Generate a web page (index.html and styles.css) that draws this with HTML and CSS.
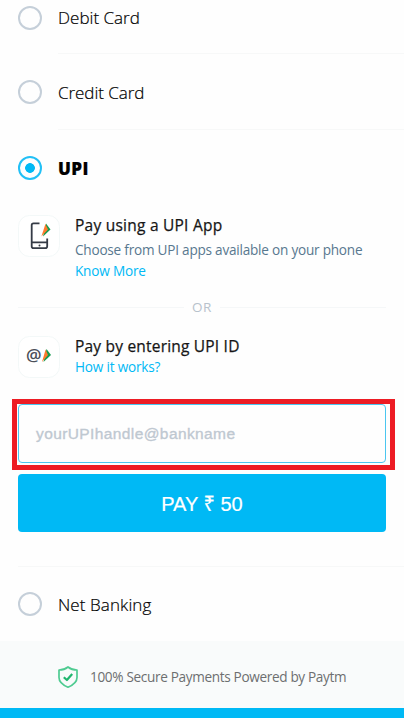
FILE: index.html
```html
<!DOCTYPE html>
<html lang="en">
<head>
<meta charset="utf-8">
<title>Payment options</title>
<link rel="stylesheet" href="styles.css">
</head>
<body>
<main class="page">
  <div class="option option-first"><span class="radio"></span><span class="label debit">Debit Card</span></div>
  <div class="option"><span class="radio"></span><span class="label credit">Credit Card</span></div>
  <div class="option option-upi"><span class="radio checked"></span><span class="label upi">UPI</span></div>
  <section class="method method-app">
    <svg class="tile" viewBox="0 0 42 42">
      <rect class="tile-box" x=".5" y=".5" width="41" height="41" rx="11"/>
      <path class="phone" d="M21.500 8.300H15.500Q13.700 8.300 13.700 10.100V31.300Q13.700 33.200 15.500 33.200H27.300Q29.200 33.200 29.200 31.300V23.500M13.700 27.300H29.200"/>
      <circle class="phone-key" cx="21.500" cy="30.400" r="1"/>
      <path class="green" d="M28 8.500l4.500 6-7.500 7z"/>
      <path class="orange" d="M27.400 9l2.600 5.600-6.600 6.900z"/>
    </svg>
    <div class="copy">
      <h2 class="title title-app">Pay using a UPI App</h2>
      <p class="hint">Choose from UPI apps available on your phone</p>
      <a class="link know">Know More</a>
    </div>
  </section>
  <div class="or"><span>OR</span></div>
  <section class="method method-id">
    <svg class="tile" viewBox="0 0 42 42">
      <rect class="tile-box" x=".5" y=".5" width="41" height="41" rx="11"/>
      <text class="at" x="8" y="25" textLength="15.500" lengthAdjust="spacingAndGlyphs">@</text>
      <path class="green" d="M28.500 13l4.500 6-7.500 7z"/>
      <path class="orange" d="M27.600 13.500l2.400 5.600-6 6.900z"/>
    </svg>
    <div class="copy">
      <h2 class="title title-id">Pay by entering UPI ID</h2>
      <a class="link how">How it works?</a>
    </div>
  </section>
  <div class="highlight"><div class="field"><span>yourUPIhandle@bankname</span></div></div>
  <div class="pay"><span>PAY ₹ 50</span></div>
  <div class="option option-net"><span class="radio"></span><span class="label net">Net Banking</span></div>
  <footer class="secure">
    <svg class="shield" viewBox="0 0 20 22">
      <path d="M10 1C7.500 3 4.200 4 1 4V11.500C1 16 5.200 19.200 10 21.200C14.800 19.200 19 16 19 11.500V4C15.800 4 12.500 3 10 1Z"/>
      <path class="tick" d="M5.800 11.200L8.900 14L14.200 8"/>
    </svg>
    <span class="secure-text">100% Secure Payments Powered by Paytm</span>
  </footer>
  <div class="bar"></div>
</main>
</body>
</html>
```

FILE: styles.css
```css
* { box-sizing: border-box; }
body { margin: 0; background: #fefefe; font-family: "Open Sans", "Noto Sans", sans-serif; }
.page { display: flex; flex-direction: column; height: 718px; overflow: hidden; white-space: nowrap; }
.option { display: flex; align-items: center; flex: none; height: 76px; padding-left: 18px;
  background: linear-gradient(#f7f8f8, #f7f8f8) 58px 100% / 100% 1px no-repeat; }
.option-first { height: 54px; padding-bottom: 19px; }
.option-upi { background: none; }
.radio { width: 24px; height: 24px; margin-right: 16px; border: 2px solid #c5cfd9; border-radius: 50%; flex: none; }
.radio.checked { border-color: #22c0f6; background: radial-gradient(circle, #00b9f5 4.500px, transparent 5.200px); }
.label { font-size: 17px; line-height: 24px; font-weight: 300; letter-spacing: .02px; color: #000; -webkit-text-stroke: .2px #000; }
.label.credit { padding-top: 2px; letter-spacing: -.05px; }
.label.net { padding-top: 2px; letter-spacing: .1px; }
.label.upi { font-size: 17px; font-weight: 800; letter-spacing: .5px; padding-top: 1px; }
.method { display: flex; flex: none; padding-left: 18px; }
.method-app { height: 90px; padding-top: 9px; }
.method-id { height: 81px; padding-top: 18px; }
.tile { width: 42px; height: 42px; flex: none; margin-right: 15px; }
.tile-box { fill: #fff; stroke: #f3f8f8; }
.phone { fill: none; stroke: #353b46; stroke-width: 1.800; }
.phone-key { fill: #353b46; }
.green { fill: #169b50; }
.orange { fill: #ff7a2d; }
.at { font: 600 17px "Open Sans", sans-serif; fill: #4b505a; }
.title { margin: -2px 0 0; font-size: 15.500px; line-height: 24px; font-weight: 400; letter-spacing: .24px; color: #161616; -webkit-text-stroke: .25px #161616; }
.title-id { letter-spacing: .2px; }
.hint { margin: 3px 0 0; font-size: 13.600px; line-height: 20px; letter-spacing: -.23px; color: #58788f; }
.link { display: block; font-size: 13.600px; line-height: 21px; letter-spacing: -.2px; color: #00b9f5; }
.know { margin-top: 0; }
.how { margin-top: -2px; }
.or { display: flex; align-items: center; flex: none; height: 22px; margin: 0 18px; font-size: 13.500px; color: #b8c2cc; }
.or::before, .or::after { content: ""; height: 1px; flex: 1; background: #f5f7f8; }
.or span { margin: 0 8px; line-height: 22px; letter-spacing: .5px; }
.highlight { flex: none; width: 383px; height: 71px; margin: 0 0 0 12px; border: 5px solid #ed1c24; padding: 0 4px 2px 1px; }
.field { height: 59px; border: 1px solid #4bc6f0; border-radius: 4px; padding-left: 17px; line-height: 57px;
  font-family: "Liberation Sans", sans-serif; font-size: 15.500px; letter-spacing: .4px; color: #bfc8d1; -webkit-text-stroke: .35px #bfc8d1; }
.pay { flex: none; display: flex; align-items: center; justify-content: center; height: 58px; margin: 4px 18px 0;
  border-radius: 4px; background: #00b9f5; color: #fff; font: 20px "Liberation Sans", "Noto Sans", sans-serif; -webkit-text-stroke: .2px #fff; }
.option-net { height: 75px; margin-top: 34px;
  background: linear-gradient(#f7f8f8, #f7f8f8) 18px 0 / 100% 1px no-repeat; }
.secure { display: flex; align-items: center; flex: none; height: 67px; padding: 5px 0 0 58px; background: #f9fbfb; }
.shield { width: 20px; height: 22px; margin-right: 12px; fill: none; stroke: #4fcb91; stroke-width: 1.700; stroke-linejoin: round; }
.tick { stroke: #21b66f; stroke-width: 2.200; }
.secure-text { font-size: 13.600px; letter-spacing: -.34px; padding-bottom: 2px; color: #6d6f70; }
.bar { flex: 1; background: #00b9f5; }
```
